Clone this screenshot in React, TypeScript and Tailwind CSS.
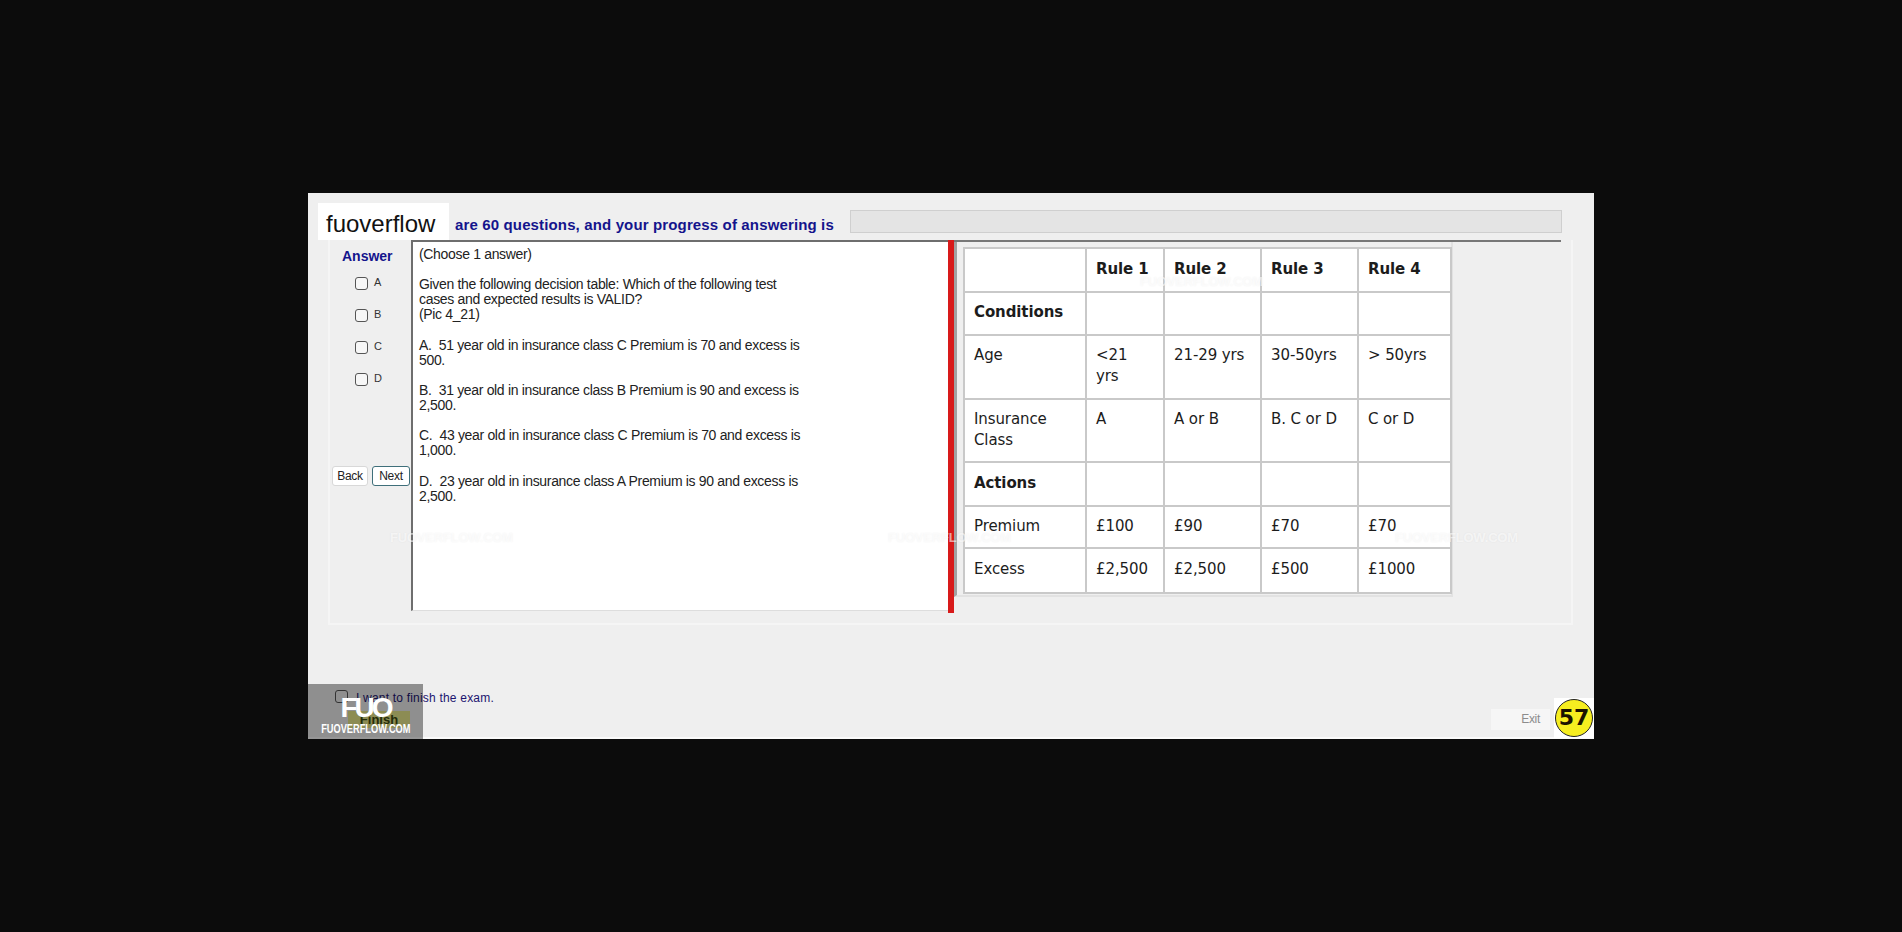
import React from 'react';

const answers = ['A', 'B', 'C', 'D'];

const rows = [
  { label: '', cells: ['Rule 1', 'Rule 2', 'Rule 3', 'Rule 4'], height: 'h-[44px]', pad: 'pt-[10px]', bold: true },
  { label: 'Conditions', cells: ['', '', '', ''], height: 'h-[43px]', pad: 'pt-[9px]', bold: true },
  { label: 'Age', cells: ['<21 yrs', '21-29 yrs', '30-50yrs', '> 50yrs'], height: 'h-[64px]', pad: 'pt-[9px]' },
  { label: 'Insurance Class', cells: ['A', 'A or B', 'B. C or D', 'C or D'], height: 'h-[63px]', pad: 'pt-[9px]' },
  { label: 'Actions', cells: ['', '', '', ''], height: 'h-[44px]', pad: 'pt-[10px]', bold: true },
  { label: 'Premium', cells: ['£100', '£90', '£70', '£70'], height: 'h-[42px]', pad: 'pt-[9px]' },
  { label: 'Excess', cells: ['£2,500', '£2,500', '£500', '£1000'], height: 'h-[45px]', pad: 'pt-[10px]' },
];

function Watermark({ className }: { className: string }) {
  return (
    <span className={`absolute text-[13px] font-bold tracking-[-0.2px] text-white/60 [text-shadow:0_0_2px_rgba(0,0,0,0.06)] pointer-events-none ${className}`}>
      FUOVERFLOW.COM
    </span>
  );
}

function DecisionTable() {
  return (
    <table className="table-fixed w-[487px] border-collapse bg-white font-['DejaVu_Sans',sans-serif] text-[15px] leading-[21px] tracking-[-0.1px] text-[#1c1c1c]">
      <colgroup>
        <col className="w-[122px]" />
        <col className="w-[78px]" />
        <col className="w-[97px]" />
        <col className="w-[97px]" />
        <col className="w-[93px]" />
      </colgroup>
      <tbody>
        {rows.map((row, r) => (
          <tr key={r} className={row.height}>
            <td className={`border-2 border-[#c9c9c9] px-[9px] align-top ${row.pad} ${row.bold ? 'font-bold' : ''}`}>
              {row.label}
            </td>
            {row.cells.map((cell, i) => (
              <td
                key={i}
                className={`border-2 border-[#c9c9c9] px-[9px] align-top ${row.pad} ${row.bold ? 'font-bold' : ''}`}
              >
                {cell}
              </td>
            ))}
          </tr>
        ))}
      </tbody>
    </table>
  );
}

export default function App() {
  return (
    <div className="h-[932px] bg-[#0c0c0c] flex items-center justify-center font-['Liberation_Sans',sans-serif]">
      <div className="relative w-[1286px] h-[546px] bg-[#efefef] flex flex-col overflow-hidden">
        {/* header */}
        <div className="h-[47px] flex items-end pl-[147px] pr-[32px] pb-[5px] gap-[16px]">
          <span className="text-[15px] leading-[20px] font-bold tracking-[0.14px] text-[#14148c] whitespace-nowrap">
            are 60 questions, and your progress of answering is
          </span>
          <div className="flex-1 h-[23px] mb-[2px] bg-[#e4e4e4] border border-[#cfcfcf]" />
        </div>

        {/* exam panel */}
        <div className="ml-[20px] w-[1245px] h-[385px] flex border-l-2 border-b-2 border-r-2 border-[#f5f5f5]">
          <div className="w-[81px] flex flex-col">
            <div className="pl-[12px] pt-[8px] text-[14px] leading-[16px] font-bold text-[#14148c]">Answer</div>
            <div className="pl-[25px] pt-[12px] flex flex-col gap-[18px]">
              {answers.map((a) => (
                <label key={a} className="flex items-center gap-[6px] h-[14px] text-[11px] text-[#333]">
                  <span className="w-[13px] h-[13px] rounded-[3px] border border-[#555] bg-[#f7f7f7]" />
                  <span className="-mt-[1px]">{a}</span>
                </label>
              ))}
            </div>
            <div className="pl-[2px] mt-[80px] flex gap-[4px] text-[12px] tracking-[-0.3px] text-[#222]">
              <button className="w-[36px] h-[20px] bg-white rounded-[3px] border border-[#d8d8d8]">Back</button>
              <button className="w-[38px] h-[20px] bg-white rounded-[3px] border border-[#3f6f7a]">Next</button>
            </div>
          </div>

          <div className="w-[537px] h-[371px] bg-white border-t-2 border-l-2 border-[#6e6e6e] border-b border-b-[#dddddd] pl-[6px] pt-[5px] text-[14px] leading-[15px] tracking-[-0.33px] text-[#222]">
            <p>(Choose 1 answer)</p>
            <p className="mt-[15px] w-[385px]">
              Given the following decision table: Which of the following test cases and expected results is VALID?
              <br />
              (Pic 4_21)
            </p>
            <p className="mt-[16px] w-[385px]">A.&nbsp; 51 year old in insurance class C Premium is 70 and excess is 500.</p>
            <p className="mt-[15px] w-[385px]">B.&nbsp; 31 year old in insurance class B Premium is 90 and excess is 2,500.</p>
            <p className="mt-[15px] w-[385px]">C.&nbsp; 43 year old in insurance class C Premium is 70 and excess is 1,000.</p>
            <p className="mt-[16px] w-[385px]">D.&nbsp; 23 year old in insurance class A Premium is 90 and excess is 2,500.</p>
          </div>

          <div className="w-[6px] h-[373px] bg-[#d81a1a]" />

          <div className="flex-1 mr-[10px]">
            <div className="border-t-2 border-[#777]">
              <div className="w-[499px] h-[355px] border-l-[3px] border-l-[#a2a2a2] border-r-2 border-b-2 border-r-[#e2e2e2] border-b-[#e2e2e2] pl-[6px] pt-[5px]">
                <DecisionTable />
              </div>
            </div>
          </div>
        </div>

        {/* footer */}
        <div className="flex-1 flex items-end justify-between pl-[27px] border-b-2 border-[#fafafa]">
          <div className="pb-[9px]">
            <label className="flex items-center gap-[8px] text-[12px] leading-[16px] tracking-[0.2px] text-[#1c1470]">
              <span className="w-[13px] h-[13px] rounded-[3px] border border-[#555] -mt-[4px]" />
              I want to finish the exam.
            </label>
            <div className="ml-[13px] mt-[5px] w-[62px] h-[17px] bg-[#e9e98c] text-center text-[13px] leading-[17px] font-bold text-[#3c4a10]">
              Finish
            </div>
          </div>
          <div className="flex items-center gap-[4px] -mb-[1px]">
            <div className="w-[59px] h-[21px] mt-[2px] bg-[#f6f6f6] pr-[10px] text-right text-[12px] leading-[21px] tracking-[-0.3px] text-[#8c8c8c]">
              Exit
            </div>
            <div className="bg-white p-[1px]">
              <div className="w-[38px] h-[38px] rounded-full bg-[#f6ee20] border border-[#222] text-center font-['DejaVu_Sans',sans-serif] text-[22px] leading-[36px] font-bold text-[#1a1200]">
                57
              </div>
            </div>
          </div>
        </div>

        {/* overlays */}
        <div className="absolute left-[10px] top-[10px] w-[131px] h-[37px] bg-white pl-[8px] pt-[2px] text-[24px] leading-[37px] text-[#111]">
          fuoverflow
        </div>
        <div className="absolute left-0 bottom-0 w-[115px] h-[55px] bg-[#000000]/40 flex flex-col items-center text-white">
          <span className="text-[28px] leading-[28px] font-bold tracking-[-3px] mt-[10px]">FUO</span>
          <span className="text-[13px] leading-[14px] font-bold scale-x-[0.71] whitespace-nowrap">FUOVERFLOW.COM</span>
        </div>
        <Watermark className="left-[82px] top-[335px]" />
        <Watermark className="left-[580px] top-[335px]" />
        <Watermark className="left-[1087px] top-[335px]" />
        <Watermark className="left-[832px] top-[79px]" />
      </div>
    </div>
  );
}
